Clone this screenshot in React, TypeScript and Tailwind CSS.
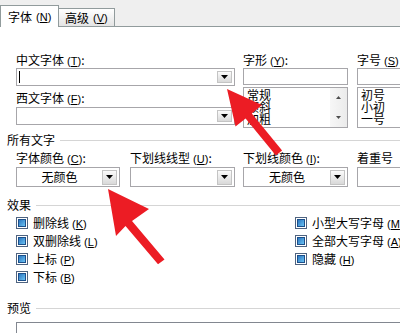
import type { ReactNode } from 'react'

function Key({ k, tab }: { k: string; tab?: boolean }) {
  return (
    <span className={`font-['Liberation_Sans',sans-serif] text-[11px] ${tab ? 'ml-[4px]' : ''}`}>
      {tab ? '' : ' '}(<span className="underline">{k}</span>)
    </span>
  )
}

function DownButton({ h }: { h: string }) {
  return (
    <div
      className={`${h} w-[15px] mr-[2px] flex items-center justify-center border border-[#c4c4c4] bg-linear-to-b from-[#fbfbfb] to-[#d9d9d9]`}
    >
      <svg width="7" height="4" viewBox="0 0 7 4">
        <polygon points="0,0 7,0 3.5,4" fill="#000" />
      </svg>
    </div>
  )
}

function Combo({
  className,
  text,
  btnH,
  children,
}: {
  className: string
  text?: string
  btnH: string
  children?: ReactNode
}) {
  return (
    <div className={`${className} flex items-center border border-[#a7a6aa] bg-white`}>
      <div className="flex-1 flex items-center justify-center">{text}</div>
      {children}
      <DownButton h={btnH} />
    </div>
  )
}

function ListBox({ items, scroll }: { items: string[]; scroll?: boolean }) {
  return (
    <div className="mt-[2px] h-[41px] flex border border-[#a7a6aa] bg-white">
      <div className="flex-1 pl-[3px] pt-[1px]">
        {items.map((it) => (
          <div key={it} className="h-[12px] leading-[12px]">
            {it}
          </div>
        ))}
      </div>
      {scroll && (
        <div className="w-[17px] flex flex-col items-center justify-between py-[8px] bg-linear-to-r from-[#f7f7f7] to-[#ebebeb]">
          <svg width="5" height="3" viewBox="0 0 5 3">
            <polygon points="0,3 5,3 2.5,0" fill="#4d4d4d" />
          </svg>
          <svg width="5" height="3" viewBox="0 0 5 3">
            <polygon points="0,0 5,0 2.5,3" fill="#4d4d4d" />
          </svg>
        </div>
      )}
    </div>
  )
}

function Section({ title, className }: { title: string; className: string }) {
  return (
    <div className={`${className} flex items-center pl-[7px] h-[12px]`}>
      <span>{title}</span>
      <div className="flex-1 h-px bg-[#d5d5d5] ml-[5px]" />
    </div>
  )
}

function Check({ label, k }: { label: string; k: string }) {
  return (
    <div className="h-[18px] flex items-center">
      <div className="w-[12px] h-[12px] border border-[#4f6380] bg-white flex items-center justify-center">
        <div className="w-[8px] h-[8px] border border-[#1c4f8a] bg-linear-to-br from-[#2a76c0] to-[#6cc2f2]" />
      </div>
      <span className="ml-[5px]">
        {label}
        <Key k={k} />
      </span>
    </div>
  )
}

export default function App() {
  return (
    <div className="relative w-[400px] h-[333px] overflow-hidden bg-white text-[12px] leading-[12px] text-black font-['Noto_Sans_CJK_SC',sans-serif]">
      {/* tabs */}
      <div className="h-[27px] bg-[#efefef] flex items-end border-b border-[#919b9c]">
        <div className="h-[22px] w-[59px] -mb-px bg-white border border-b-0 border-[#919b9c] flex items-center pl-[7px]">
          字体
          <Key k="N" tab />
        </div>
        <div className="h-[18px] w-[56px] border border-l-0 border-b-0 border-[#919b9c] bg-linear-to-b from-[#ffffff] to-[#e4e4e4] flex items-center pl-[6px]">
          高级
          <Key k="V" tab />
        </div>
      </div>

      {/* font row */}
      <div className="flex ml-[16px] mt-[27px]">
        <div className="w-[219px] shrink-0">
          <div className="h-[12px]">
            中文字体
            <Key k="T" />:
          </div>
          <div className="mt-[2px] h-[18px] flex items-center border border-[#a7a6aa]">
            <div className="ml-[2px] w-px h-[12px] bg-black" />
            <div className="flex-1" />
            <DownButton h="h-[12px]" />
          </div>
          <div className="h-[12px] mt-[6px]">
            西文字体
            <Key k="F" />:
          </div>
          <Combo className="mt-[3px] h-[18px]" btnH="h-[12px]" />
        </div>
        <div className="w-[105px] ml-[8px] shrink-0">
          <div className="h-[12px]">
            字形
            <Key k="Y" />:
          </div>
          <div className="mt-[2px] h-[17px] border border-[#a7a6aa]" />
          <ListBox items={['常规', '倾斜', '加粗']} scroll />
        </div>
        <div className="w-[60px] ml-[9px] shrink-0">
          <div className="h-[12px] whitespace-nowrap">
            字号
            <Key k="S" />
          </div>
          <div className="mt-[2px] h-[17px] border border-[#a7a6aa]" />
          <ListBox items={['初号', '小初', '一号']} />
        </div>
      </div>

      <Section title="所有文字" className="mt-[6px]" />

      <div className="flex ml-[16px] mt-[6px]">
        <div className="w-[104px] shrink-0">
          <div className="h-[12px] whitespace-nowrap">
            字体颜色
            <Key k="C" />:
          </div>
          <Combo className="mt-[3px] h-[20px]" text="无颜色" btnH="h-[15px]" />
        </div>
        <div className="w-[105px] ml-[10px] shrink-0">
          <div className="h-[12px] whitespace-nowrap">
            下划线线型
            <Key k="U" />:
          </div>
          <Combo className="mt-[3px] h-[20px]" btnH="h-[15px]" />
        </div>
        <div className="w-[105px] ml-[8px] shrink-0">
          <div className="h-[12px] whitespace-nowrap">
            下划线颜色
            <Key k="I" />:
          </div>
          <Combo className="mt-[3px] h-[20px]" text="无颜色" btnH="h-[15px]" />
        </div>
        <div className="w-[60px] ml-[9px] shrink-0">
          <div className="h-[12px] whitespace-nowrap">着重号</div>
          <div className="mt-[3px] h-[20px] border border-[#a7a6aa]" />
        </div>
      </div>

      <Section title="效果" className="mt-[12px]" />

      <div className="flex mt-[3px]">
        <div className="ml-[16px] w-[279px] shrink-0">
          <Check label="删除线" k="K" />
          <Check label="双删除线" k="L" />
          <Check label="上标" k="P" />
          <Check label="下标" k="B" />
        </div>
        <div className="shrink-0 whitespace-nowrap">
          <Check label="小型大写字母" k="M" />
          <Check label="全部大写字母" k="A" />
          <Check label="隐藏" k="H" />
        </div>
      </div>

      <Section title="预览" className="mt-[16px]" />
      <div className="mt-[8px] ml-[16px] h-[40px] border border-r-0 border-[#828790]" />

      {/* red arrows drawn over the dialog */}
      <svg className="absolute inset-0 pointer-events-none" width="400" height="333" viewBox="0 0 400 333">
        <polygon
          points="227,89 262,105 251.8,113.4 282.1,150.5 275.9,155.5 245.6,118.4 235.5,126.6"
          fill="#ec1c24"
        />
        <polygon
          points="108,189 149,209 132,221 164.5,259.6 158,264.3 125.5,226 116,236"
          fill="#ec1c24"
        />
      </svg>
    </div>
  )
}
